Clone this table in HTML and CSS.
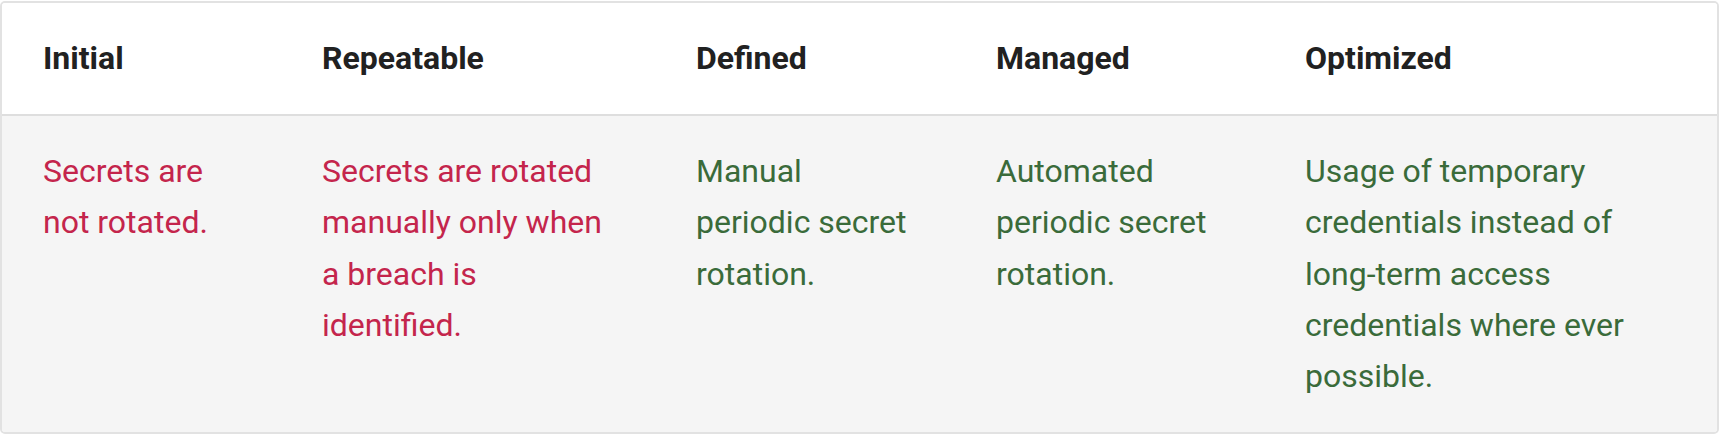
FILE: index.html
```html
<!DOCTYPE html>
<html lang="en">
<head>
<meta charset="utf-8">
<title>Secret rotation maturity</title>
<link rel="stylesheet" href="styles.css">
</head>
<body>
<table class="maturity">
  <colgroup>
    <col class="c1">
    <col class="c2">
    <col class="c3">
    <col class="c4">
    <col class="c5">
  </colgroup>
  <thead>
    <tr>
      <th>Initial</th>
      <th>Repeatable</th>
      <th>Defined</th>
      <th>Managed</th>
      <th>Optimized</th>
    </tr>
  </thead>
  <tbody>
    <tr>
      <td class="bad">Secrets are not rotated.</td>
      <td class="bad">Secrets are rotated manually only when a breach is identified.</td>
      <td class="good">Manual periodic secret rotation.</td>
      <td class="good">Automated periodic secret rotation.</td>
      <td class="good">Usage of temporary credentials instead of long-term access credentials where ever possible.</td>
    </tr>
  </tbody>
</table>
</body>
</html>
```
FILE: styles.css
```css
html, body {
  margin: 0;
  padding: 0;
  background: #ffffff;
}
body {
  padding: 1px 0 0 0;
  font-family: Roboto, "Liberation Sans", Arial, sans-serif;
}
.maturity {
  width: 1719px;
  table-layout: fixed;
  border-collapse: separate;
  border-spacing: 0;
  border: 2px solid #e2e2e2;
  border-radius: 5px;
  overflow: hidden;
  font-size: 32px;
  line-height: 1.6;
}
.c1 { width: 279px; }
.c2 { width: 374px; }
.c3 { width: 300px; }
.c4 { width: 309px; }
.c5 { width: 453px; }
.maturity th,
.maturity td {
  padding: 30px 41px;
  text-align: left;
  vertical-align: top;
}
.maturity th {
  font-weight: 700;
  color: #212121;
  background: #ffffff;
  border-bottom: 2px solid #dedede;
}
.maturity td {
  font-weight: 400;
  background: #f5f5f5;
}
.bad { color: #c4254c; }
.good { color: #3a6b3a; }
```
